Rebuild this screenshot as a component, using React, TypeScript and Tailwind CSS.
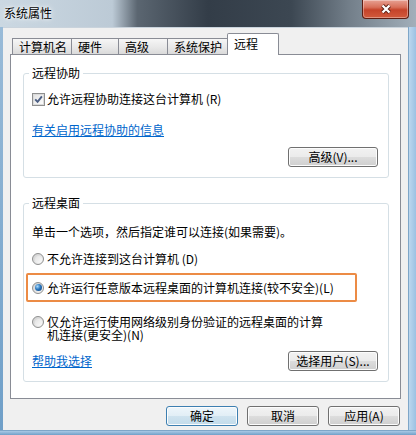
import React from "react";

// Win7 风格的 "系统属性 - 远程" 对话框

const CheckBox = () => (
  <span className="w-[13px] h-[13px] border border-[#8e8f8f] bg-white flex items-center justify-center shrink-0">
    <span className="w-[11px] h-[11px] border border-[#dadada] bg-[linear-gradient(135deg,#e4e4e4,#fbfbfb)] flex items-center justify-center">
      <svg width="9" height="9" viewBox="0 0 9 9">
        <path d="M1.2 4.3 L3.6 6.9 L7.9 1.4" fill="none" stroke="#4b5e83" strokeWidth="1.9" />
      </svg>
    </span>
  </span>
);

const Radio = ({ on = false }: { on?: boolean }) => (
  <span className="w-[12px] h-[12px] rounded-full border border-[#8e8f8f] bg-[linear-gradient(135deg,#cfcfcf,#f6f6f6)] flex items-center justify-center shrink-0">
    <span
      className={
        on
          ? "w-[7px] h-[7px] rounded-full bg-[radial-gradient(circle_at_35%_35%,#a9dcff_0%,#2a76bd_45%,#0d3f78_100%)]"
          : "w-[7px] h-[7px] rounded-full bg-[linear-gradient(135deg,#e2e2e2,#fafafa)]"
      }
    />
  </span>
);

const Btn = ({ label, cls, primary = false }: { label: string; cls: string; primary?: boolean }) => (
  <div
    className={`${cls} h-[20px] shrink-0 rounded-[3px] border flex items-center justify-center shadow-[inset_0_0_0_1px_#fcfcfc] ${
      primary
        ? "border-[#3c7fb1] bg-[linear-gradient(180deg,#eef6fb_0%,#e1eef6_50%,#cfe3ef_50%,#c2dbea_100%)]"
        : "border-[#707070] bg-[linear-gradient(180deg,#f2f2f2_0%,#ebebeb_50%,#dddddd_50%,#cfcfcf_100%)]"
    }`}
  >
    {label}
  </div>
);

const tabs = [
  { label: "计算机名", cls: "w-[60px]" },
  { label: "硬件", cls: "w-[48px] -ml-px" },
  { label: "高级", cls: "w-[50px] -ml-px" },
  { label: "系统保护", cls: "w-[61px] -ml-px" },
];

export default function App() {
  return (
    <div className="w-[416px] h-[435px] flex flex-col overflow-hidden bg-[linear-gradient(180deg,#9cbdd9,#6f9fc8)] text-black text-[12px] leading-[16px] font-['Noto_Sans_CJK_SC',sans-serif]">
      {/* 标题栏 */}
      <div className="h-[27px] shrink-0 flex items-start bg-[linear-gradient(90deg,#cbd8e2_0%,#bccad6_27%,#5b6671_33%,#333d48_50%,#3c4752_70%,#737f8a_84%,#a2afba_100%)]">
        <span className="ml-[4px] mt-[5px] [text-shadow:0_0_6px_#ffffff,0_0_3px_#ffffff]">系统属性</span>
        <div className="ml-auto mr-[7px] w-[47px] h-[19px] rounded-b-[4px] border border-t-0 border-[#5e1d12] bg-[linear-gradient(180deg,#e7a193_0%,#d8705a_40%,#c5432a_55%,#d25a3c_100%)] shadow-[inset_0_0_0_1px_rgba(255,255,255,0.35)] flex items-center justify-center">
          <svg width="14" height="12" viewBox="0 0 14 12">
            <path d="M3.5 2.5 L10.5 9.5 M10.5 2.5 L3.5 9.5" stroke="#5a1e12" strokeWidth="4" />
            <path d="M3.5 2.5 L10.5 9.5 M10.5 2.5 L3.5 9.5" stroke="#ffffff" strokeWidth="2.3" />
          </svg>
        </div>
      </div>

      <div className="flex-1 flex">
        <div className="w-[3px] shrink-0" />
        <div className="flex-1 bg-[#f0f0f0] flex flex-col border-t border-[#c9d3dc]">
          {/* 选项卡 */}
          <div className="mt-[5px] pl-[9px] flex items-end relative z-10 -mb-px">
            {tabs.map((t) => (
              <div
                key={t.label}
                className={`${t.cls} h-[17px] pl-[6px] border border-[#898c95] bg-[linear-gradient(180deg,#f6f6f6_0%,#e8e8e8_55%,#dadada_100%)] flex items-center`}
              >
                {t.label}
              </div>
            ))}
            <div className="w-[52px] -ml-px h-[22px] pl-[6px] pb-[2px] border border-b-0 border-[#898c95] bg-white rounded-t-[2px] flex items-center relative z-10">
              远程
            </div>
          </div>

          {/* 面板 */}
          <div className="ml-[7px] w-[391px] h-[345px] border border-[#898c95] bg-white pl-[12px] pr-[11px] pt-[10px]">
            <fieldset className="border border-[#d5dfe5] rounded-[3px] pl-[8px] pr-[10px] pb-[10px]">
              <legend className="-ml-[3px] px-[3px]">远程协助</legend>
              <div className="mt-[10px] h-[16px] flex items-center gap-[2px]">
                <CheckBox />
                <span>允许远程协助连接这台计算机 (R)</span>
              </div>
              <div className="mt-[15px] h-[16px]">
                <span className="text-[#0066cc] underline">有关启用远程协助的信息</span>
              </div>
              <div className="mt-[9px] flex justify-end">
                <Btn label="高级(V)..." cls="w-[90px]" />
              </div>
            </fieldset>

            <fieldset className="mt-[17px] border border-[#d5dfe5] rounded-[3px] pl-[8px] pr-[10px] pb-[10px]">
              <legend className="-ml-[3px] px-[3px]">远程桌面</legend>
              <div className="mt-[13px] h-[16px]">单击一个选项，然后指定谁可以连接(如果需要)。</div>
              <div className="mt-[11px] h-[16px] flex items-center gap-[3px]">
                <Radio />
                <span>不允许连接到这台计算机 (D)</span>
              </div>
              <div className="mt-[6px] -ml-[6px] w-[331px] h-[29px] border-2 border-[#ec8b45] rounded-[2px] pl-[4px] flex items-center gap-[3px]">
                <Radio on />
                <span>允许运行任意版本远程桌面的计算机连接(较不安全)(L)</span>
              </div>
              <div className="mt-[13px] flex items-start gap-[3px]">
                <span className="mt-[1px]">
                  <Radio />
                </span>
                <span className="leading-[13px]">
                  仅允许运行使用网络级别身份验证的远程桌面的计算
                  <br />
                  机连接(更安全)(N)
                </span>
              </div>
              <div className="mt-[10px] flex items-center justify-between">
                <span className="text-[#0066cc] underline">帮助我选择</span>
                <Btn label="选择用户(S)..." cls="w-[90px]" />
              </div>
            </fieldset>
          </div>

          {/* 底部按钮 */}
          <div className="mt-[7px] pr-[8px] flex justify-end gap-[9px]">
            <Btn label="确定" cls="w-[72px]" primary />
            <Btn label="取消" cls="w-[72px]" />
            <Btn label="应用(A)" cls="w-[72px]" />
          </div>
        </div>
        <div className="w-[8px] shrink-0 border-l border-[#7ea6c8] bg-[linear-gradient(90deg,#bcd7ee,#9cc1e2)]" />
      </div>
      <div className="h-[5px] shrink-0 border-t border-[#7ea6c8] bg-[linear-gradient(180deg,#a9c9e6,#6f9fc8)]" />
    </div>
  );
}
